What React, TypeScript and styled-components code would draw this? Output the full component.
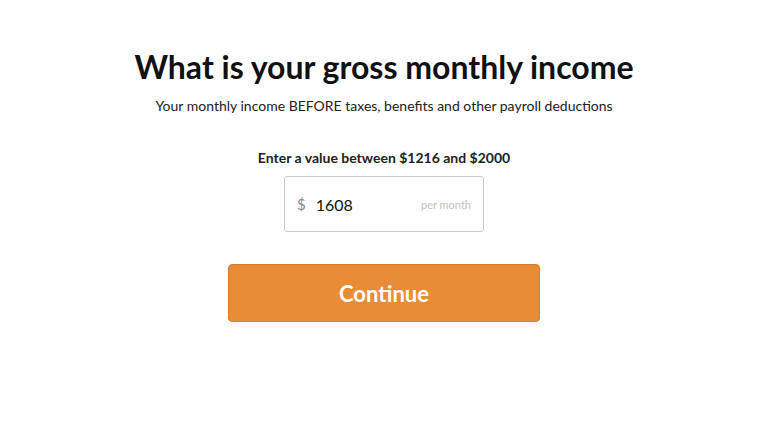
import styled, { createGlobalStyle } from "styled-components";

const GlobalStyle = createGlobalStyle`
  body {
    margin: 0;
    background: #fff;
    font-family: Lato, "Open Sans", sans-serif;
    color: #1a1a1a;
  }
`;

function App() {
  return (
    <>
      <GlobalStyle />
      <Page>
        <Title>What is your gross monthly income</Title>
        <Subtitle>
          Your monthly income BEFORE taxes, benefits and other payroll deductions
        </Subtitle>
        <Label>Enter a value between $1216 and $2000</Label>
        <InputBox>
          <Currency>$</Currency>
          <Value type="text" defaultValue="1608" />
          <Suffix>per month</Suffix>
        </InputBox>
        <Button>Continue</Button>
      </Page>
    </>
  );
}

const Page = styled.div`
  display: flex;
  flex-direction: column;
  align-items: center;
  padding-top: 48px;
  min-height: 100vh;
  box-sizing: border-box;
`;

const Title = styled.h1`
  margin: 0;
  font-size: 32px;
  font-weight: 700;
  line-height: 38px;
  color: #111;
`;

const Subtitle = styled.p`
  margin: 11px 0 0;
  font-size: 14px;
  line-height: 18px;
  color: #222;
`;

const Label = styled.div`
  margin-top: 34px;
  font-size: 14px;
  font-weight: 700;
  line-height: 18px;
  color: #222;
`;

const InputBox = styled.label`
  margin-top: 9px;
  width: 200px;
  height: 56px;
  box-sizing: border-box;
  border: 1px solid #ccc;
  border-radius: 3px;
  display: flex;
  align-items: center;
  padding: 0 12px;
`;

const Currency = styled.span`
  font-size: 15px;
  color: #888;
  margin-right: 10px;
`;

const Value = styled.input`
  flex: 1;
  min-width: 0;
  border: none;
  outline: none;
  padding: 0;
  font-family: inherit;
  font-size: 16px;
  color: #111;
  background: transparent;
`;

const Suffix = styled.span`
  font-size: 11px;
  color: #c2c2c2;
`;

const Button = styled.button`
  margin-top: 32px;
  width: 312px;
  height: 58px;
  border: 1px solid #d97f2a;
  border-radius: 4px;
  background: #e88d35;
  color: #fff;
  font-family: inherit;
  font-size: 22px;
  font-weight: 700;
  cursor: pointer;
`;

export default App;
